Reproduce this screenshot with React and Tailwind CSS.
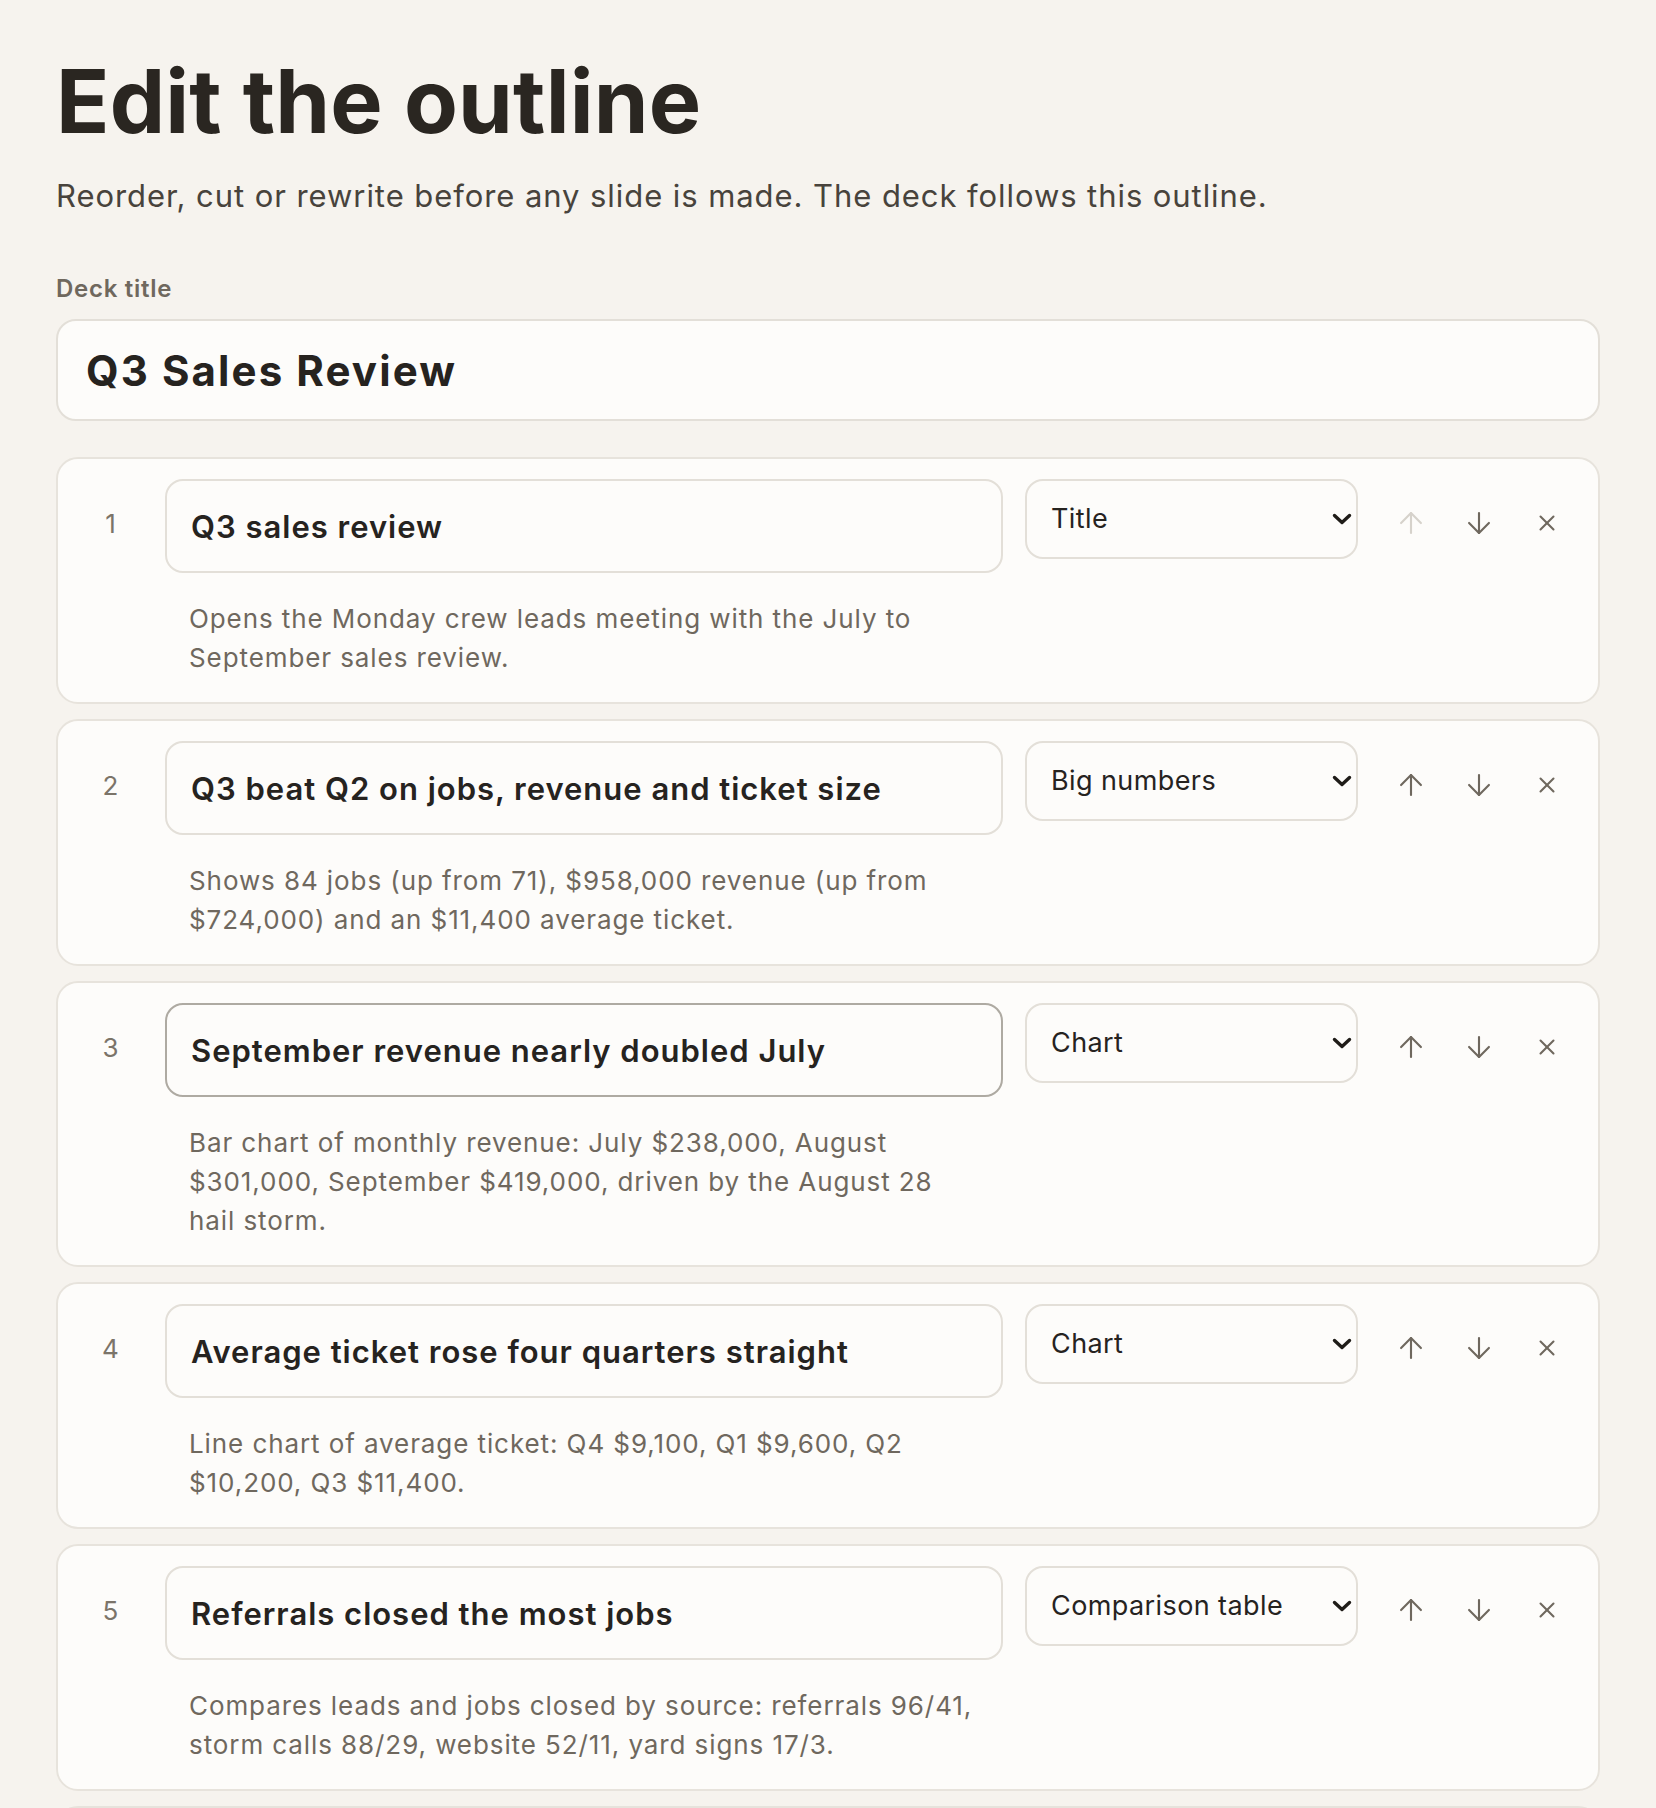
import { useState } from 'react';
import { ArrowUp, ArrowDown, X } from 'lucide-react';

const LAYOUTS = ['Title', 'Big numbers', 'Chart', 'Comparison table', 'Bullets', 'Quote', 'Closing'];

const INITIAL_SLIDES = [
  {
    id: 1,
    title: 'Q3 sales review',
    layout: 'Title',
    notes: 'Opens the Monday crew leads meeting with the July to September sales review.',
  },
  {
    id: 2,
    title: 'Q3 beat Q2 on jobs, revenue and ticket size',
    layout: 'Big numbers',
    notes: 'Shows 84 jobs (up from 71), $958,000 revenue (up from $724,000) and an $11,400 average ticket.',
  },
  {
    id: 3,
    title: 'September revenue nearly doubled July',
    layout: 'Chart',
    notes: 'Bar chart of monthly revenue: July $238,000, August $301,000, September $419,000, driven by the August 28 hail storm.',
  },
  {
    id: 4,
    title: 'Average ticket rose four quarters straight',
    layout: 'Chart',
    notes: 'Line chart of average ticket: Q4 $9,100, Q1 $9,600, Q2 $10,200, Q3 $11,400.',
  },
  {
    id: 5,
    title: 'Referrals closed the most jobs',
    layout: 'Comparison table',
    notes: 'Compares leads and jobs closed by source: referrals 96/41, storm calls 88/29, website 52/11, yard signs 17/3.',
  },
  {
    id: 6,
    title: 'What we focus on in Q4',
    layout: 'Bullets',
    notes: 'Follow up every storm lead within a day, ask each finished job for a referral, and keep crews booked through November.',
  },
];

function Chevron() {
  return (
    <svg
      className="pointer-events-none absolute right-[6px] top-1/2 -translate-y-1/2"
      width="20"
      height="12"
      viewBox="0 0 20 12"
      fill="none"
    >
      <path d="M2.5 2.5 10 9.5l7.5-7" stroke="#1f1c18" strokeWidth="3.4" strokeLinecap="round" strokeLinejoin="round" />
    </svg>
  );
}

function SlideRow({ slide, index, count, highlight, onChange, onMove, onRemove }) {
  const first = index === 0;
  const last = index === count - 1;
  return (
    <div className="rounded-[22px] border-2 border-[#e7e3dc] bg-[#fdfcfa] px-[20px] pt-[20px] pb-[25px]">
      <div className="flex items-start gap-[22px]">
        <div className="flex h-[88px] w-[65px] shrink-0 items-center justify-center text-[26px] text-[#7b7469]">
          {index + 1}
        </div>
        <input
          value={slide.title}
          onChange={(e) => onChange({ ...slide, title: e.target.value })}
          className={`h-[94px] min-w-0 flex-1 rounded-[18px] border-2 bg-[#fdfcfa] px-[24px] text-[31px] font-semibold tracking-[0.032em] text-[#26231f] outline-none ${
            highlight ? 'border-[#aeaaa2]' : 'border-[#e3dfd8]'
          }`}
        />
        <div className="relative w-[333px] shrink-0">
          <select
            value={slide.layout}
            onChange={(e) => onChange({ ...slide, layout: e.target.value })}
            className="h-[80px] w-full appearance-none rounded-[18px] border-2 border-[#e3dfd8] bg-[#fdfcfa] pl-[24px] pr-[40px] text-[27px] tracking-[0.015em] text-[#26231f] outline-none"
          >
            {LAYOUTS.map((l) => (
              <option key={l} value={l}>{l}</option>
            ))}
          </select>
          <Chevron />
        </div>
        <div className="flex shrink-0 gap-[6px]">
          <button
            onClick={() => onMove(-1)}
            disabled={first}
            aria-label="Move up"
            className={`flex h-[88px] w-[62px] items-center justify-center ${first ? 'text-[#d6d2cb]' : 'text-[#6f685e]'}`}
          >
            <ArrowUp size={34} strokeWidth={1.5} />
          </button>
          <button
            onClick={() => onMove(1)}
            disabled={last}
            aria-label="Move down"
            className={`flex h-[88px] w-[62px] items-center justify-center ${last ? 'text-[#d6d2cb]' : 'text-[#6f685e]'}`}
          >
            <ArrowDown size={34} strokeWidth={1.5} />
          </button>
          <button
            onClick={onRemove}
            aria-label="Remove slide"
            className="flex h-[88px] w-[62px] items-center justify-center text-[#6f685e]"
          >
            <X size={26} strokeWidth={1.9} />
          </button>
        </div>
      </div>
      <p className="mt-[26px] ml-[87px] w-[790px] pl-[24px] box-content text-[26px] leading-[39px] tracking-[0.035em] text-[#6f685e]">
        {slide.notes}
      </p>
    </div>
  );
}

export default function App() {
  const [deckTitle, setDeckTitle] = useState('Q3 Sales Review');
  const [slides, setSlides] = useState(INITIAL_SLIDES);

  function move(i, dir) {
    const j = i + dir;
    if (j < 0 || j >= slides.length) return;
    const next = [...slides];
    [next[i], next[j]] = [next[j], next[i]];
    setSlides(next);
  }

  return (
    <div className="min-h-screen bg-[#f6f3ee] font-['Inter',sans-serif] text-[#2a2621]">
      <div className="px-[56px] pt-[57px] pb-[60px]">
        <h1 className="text-[88px] font-bold leading-none tracking-[0.002em] text-[#2a2621]">Edit the outline</h1>
        <p className="mt-[30px] text-[31px] leading-[42px] tracking-[0.03em] text-[#48433c]">
          Reorder, cut or rewrite before any slide is made. The deck follows this outline.
        </p>

        <label className="mt-[54px] block text-[24px] font-semibold leading-[36px] tracking-[0.03em] text-[#6f685e]">
          Deck title
        </label>
        <input
          value={deckTitle}
          onChange={(e) => setDeckTitle(e.target.value)}
          className="mt-[12px] block h-[102px] w-full rounded-[20px] border-2 border-[#e3dfd8] bg-[#fdfcfa] px-[28px] text-[42px] font-bold tracking-[0.05em] text-[#26231f] outline-none"
        />

        <div className="mt-[36px] flex flex-col gap-[15px]">
          {slides.map((slide, i) => (
            <SlideRow
              key={slide.id}
              slide={slide}
              index={i}
              count={slides.length}
              highlight={slide.id === 3}
              onChange={(s) => setSlides(slides.map((x) => (x.id === s.id ? s : x)))}
              onMove={(dir) => move(i, dir)}
              onRemove={() => setSlides(slides.filter((x) => x.id !== slide.id))}
            />
          ))}
        </div>
      </div>
    </div>
  );
}
